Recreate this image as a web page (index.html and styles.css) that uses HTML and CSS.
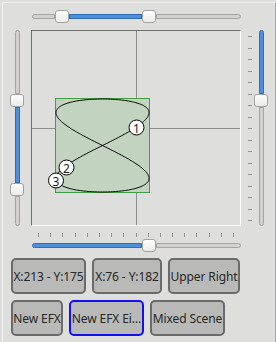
FILE: index.html
```html
<!DOCTYPE html>
<html>
<head>
<meta charset="utf-8">
<link rel="stylesheet" href="styles.css">
</head>
<body>
<div class="frame">
  <div class="top-row">
    <div class="hslider">
      <div class="groove grey start" style="width:23px"></div>
      <div class="handle"></div>
      <div class="groove blue" style="width:73px"></div>
      <div class="handle"></div>
      <div class="groove grey end" style="width:85px"></div>
    </div>
  </div>

  <div class="middle">
    <div class="vslider">
      <div class="vgroove grey start" style="height:64px"></div>
      <div class="handle"></div>
      <div class="vgroove blue" style="height:76px"></div>
      <div class="handle"></div>
      <div class="vgroove grey end" style="height:30px"></div>
    </div>

    <div class="canvas">
      <svg width="208" height="194" viewBox="0 0 208 194">
        <line x1="104.5" y1="0" x2="104.5" y2="194" class="cross"/>
        <line x1="0" y1="97.5" x2="208" y2="97.5" class="cross"/>
        <rect x="23.5" y="67.5" width="94" height="94" class="area"/>
        <path id="curve" class="curve" d=""/>
        <g class="pt">
          <circle cx="104.5" cy="96.5" r="7.5"/>
          <text x="104.5" y="97">1</text>
        </g>
        <g class="pt">
          <circle cx="34.5" cy="136.5" r="7.5"/>
          <text x="34.5" y="137">2</text>
        </g>
        <g class="pt">
          <circle cx="24" cy="149.5" r="7.5"/>
          <text x="24" y="150">3</text>
        </g>
      </svg>
    </div>

    <div class="vticks">
      <i></i><i></i><i></i><i></i><i></i><i></i><i></i><i></i><i></i>
      <i></i><i></i><i></i><i></i><i></i><i></i><i></i><i></i>
    </div>

    <div class="vslider right">
      <div class="vgroove blue start" style="height:64px"></div>
      <div class="handle"></div>
      <div class="vgroove grey end" style="height:119px"></div>
    </div>
  </div>

  <div class="hticks">
    <i></i><i></i><i></i><i></i><i></i><i></i><i></i><i></i><i></i>
    <i></i><i></i><i></i><i></i><i></i><i></i><i></i><i></i>
  </div>

  <div class="bottom-row">
    <div class="hslider">
      <div class="groove blue start" style="width:110px"></div>
      <div class="handle"></div>
      <div class="groove grey end" style="width:85px"></div>
    </div>
  </div>

  <div class="buttons">
    <div class="btn-row">
      <button class="btn w-xy1">X:213 - Y:175</button>
      <button class="btn w-xy2">X:76 - Y:182</button>
      <button class="btn w-ur">Upper Right</button>
    </div>
    <div class="btn-row">
      <button class="btn w-new">New EFX</button>
      <button class="btn w-edit focus">New EFX Ei…</button>
      <button class="btn w-mix">Mixed Scene</button>
    </div>
  </div>
</div>
<script src="script.js"></script>
</body>
</html>
```

FILE: styles.css
```css
body {
  margin: 0;
  background: #dedfdc;
  font-family: "Noto Sans", "Open Sans", sans-serif;
}

.frame {
  margin: 2px 0 0 2px;
  width: 274px;
  height: 340px;
  box-sizing: border-box;
  border-left: 1px solid #f2f2f0;
  border-top: 1px solid #f2f2f0;
  border-right: 1px solid #a9a9a9;
}

.top-row {
  display: flex;
  padding: 7px 0 0 29px;
}

.hslider {
  display: flex;
  align-items: center;
  height: 13px;
}

.groove {
  height: 5px;
  box-sizing: border-box;
}

.vgroove {
  width: 5px;
  box-sizing: border-box;
}

.grey {
  background: #d3d0d0;
  border: 1px solid #a7a3a3;
}

.blue {
  background: #4d8fdc;
  border: 1px solid #2f6cba;
}

.groove.start { border-radius: 3px 0 0 3px; }
.groove.end { border-radius: 0 3px 3px 0; }
.vgroove.start { border-radius: 3px 3px 0 0; }
.vgroove.end { border-radius: 0 0 3px 3px; }

.handle {
  width: 14px;
  height: 13px;
  box-sizing: border-box;
  border: 1px solid #a3a3a3;
  border-radius: 3px;
  background: linear-gradient(#fdfdfd, #ebebeb);
  flex: none;
}

.middle {
  display: flex;
  margin-top: 7px;
  height: 196px;
  padding-left: 7px;
}

.vslider {
  width: 14px;
  display: flex;
  flex-direction: column;
  align-items: center;
}

.vslider.right {
  margin-left: 2px;
}

.canvas {
  margin-left: 7px;
  width: 210px;
  height: 196px;
  box-sizing: border-box;
  border-top: 1px solid #6f6f6f;
  border-left: 1px solid #6f6f6f;
  border-right: 1px solid #ffffff;
  border-bottom: 1px solid #ffffff;
}

.canvas svg {
  display: block;
}

.cross {
  stroke: #8e8e8e;
  stroke-width: 1;
}

.area {
  fill: #c2d4c0;
  stroke: #45a045;
  stroke-width: 1;
}

.curve {
  fill: none;
  stroke: #000000;
  stroke-width: 1;
}

.pt circle {
  fill: #ffffff;
  stroke: #000000;
  stroke-width: 1;
}

.pt text {
  font-family: "Noto Sans", sans-serif;
  font-size: 12px;
  fill: #1c1c1c;
  text-anchor: middle;
  dominant-baseline: central;
}

.vticks {
  margin-left: 7px;
  width: 4px;
  display: flex;
  flex-direction: column;
  justify-content: space-between;
  padding: 6px 0 5px 0;
  box-sizing: border-box;
  height: 196px;
}

.vticks i {
  display: block;
  width: 4px;
  height: 1px;
  background: #939393;
}

.hticks {
  display: flex;
  justify-content: space-between;
  margin: 7px 0 0 29px;
  width: 209px;
  height: 4px;
  padding: 0 7px 0 6px;
  box-sizing: border-box;
}

.hticks i {
  display: block;
  width: 1px;
  height: 4px;
  background: #939393;
}

.bottom-row {
  display: flex;
  margin: 2px 0 0 29px;
}

.buttons {
  margin-top: 6px;
  padding-left: 8px;
  display: flex;
  flex-direction: column;
  gap: 6px;
}

.btn-row {
  display: flex;
  gap: 6px;
}

.btn {
  height: 36px;
  box-sizing: border-box;
  border: 2px solid #6b6b6b;
  border-radius: 5px;
  background: #b9bab8;
  color: #262626;
  font-family: "Noto Sans", sans-serif;
  font-size: 12px;
  letter-spacing: -0.1px;
  padding: 0;
  white-space: nowrap;
  overflow: hidden;
  text-align: center;
}

.w-xy1 { width: 75px; }
.w-xy2 { width: 70px; }
.w-ur { width: 72px; }
.w-new { width: 52px; }
.w-edit { width: 75px; }
.w-mix { width: 75px; }

.btn.focus {
  border-color: #1010f0;
}
```

FILE: script.js
```js
var curve = document.getElementById('curve');
var d = '';
for (var i = 0; i <= 360; i++) {
  var t = i * Math.PI / 180;
  var x = 70.5 + 46.5 * Math.sin(2 * t);
  var y = 114.5 - 46.5 * Math.sin(t);
  d += (i ? 'L' : 'M') + x.toFixed(2) + ' ' + y.toFixed(2);
}
curve.setAttribute('d', d + 'Z');
```
